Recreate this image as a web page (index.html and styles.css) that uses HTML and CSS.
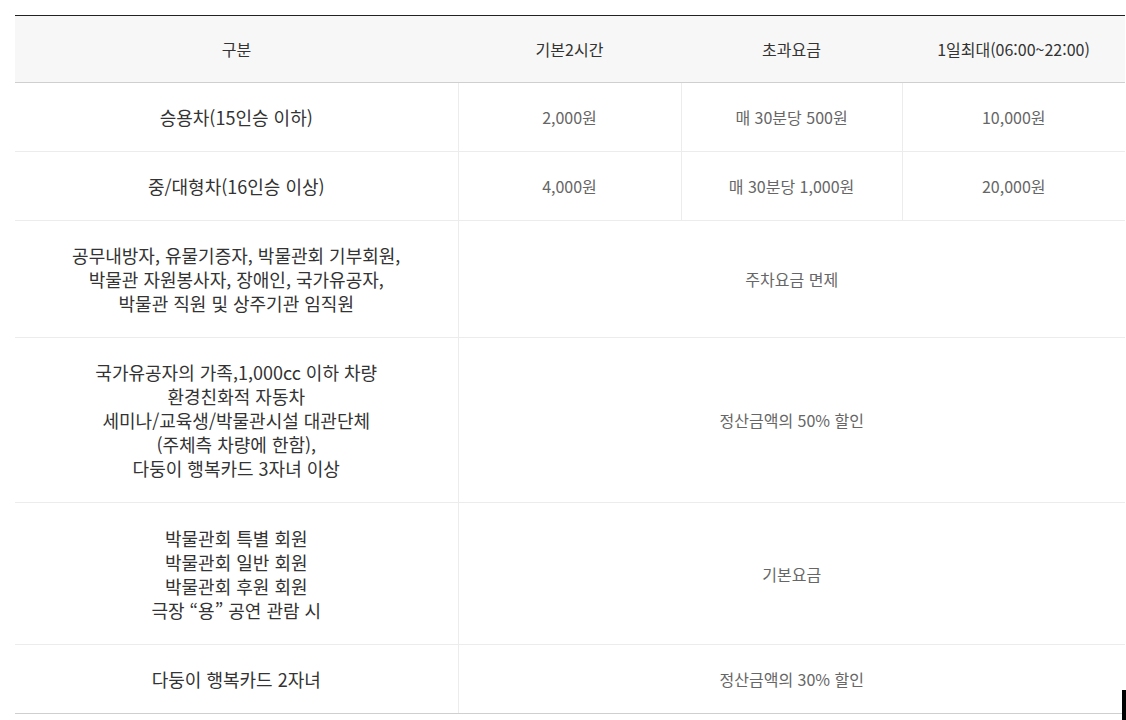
FILE: index.html
```html
<!DOCTYPE html>
<html lang="ko">
<head>
<meta charset="utf-8">
<link rel="stylesheet" href="styles.css">
</head>
<body>
<table class="fee">
  <colgroup>
    <col class="c1"><col class="c2"><col class="c3"><col class="c4">
  </colgroup>
  <thead>
    <tr><th>구분</th><th>기본2시간</th><th>초과요금</th><th>1일최대(06:00~22:00)</th></tr>
  </thead>
  <tbody>
    <tr><td class="cat">승용차(15인승 이하)</td><td>2,000원</td><td>매 30분당 500원</td><td>10,000원</td></tr>
    <tr><td class="cat">중/대형차(16인승 이상)</td><td>4,000원</td><td>매 30분당 1,000원</td><td>20,000원</td></tr>
    <tr><td class="cat">공무내방자, 유물기증자, 박물관회 기부회원,<br>박물관 자원봉사자, 장애인, 국가유공자,<br>박물관 직원 및 상주기관 임직원</td><td colspan="3">주차요금 면제</td></tr>
    <tr><td class="cat">국가유공자의 가족,1,000cc 이하 차량<br>환경친화적 자동차<br>세미나/교육생/박물관시설 대관단체<br>(주체측 차량에 한함),<br>다둥이 행복카드 3자녀 이상</td><td colspan="3">정산금액의 50% 할인</td></tr>
    <tr class="r5"><td class="cat">박물관회 특별 회원<br>박물관회 일반 회원<br>박물관회 후원 회원<br>극장 “용” 공연 관람 시</td><td colspan="3">기본요금</td></tr>
    <tr class="last"><td class="cat">다둥이 행복카드 2자녀</td><td colspan="3">정산금액의 30% 할인</td></tr>
  </tbody>
</table>
<div class="corner"></div>
</body>
</html>
```

FILE: styles.css
```css
html, body {
  margin: 0;
  background: #fff;
}
body {
  padding: 15px 0 0 15px;
  font-family: "Noto Sans CJK KR", "Noto Sans", sans-serif;
}
.fee {
  width: 1110px;
  border-collapse: collapse;
  table-layout: fixed;
  border-top: 1px solid #222;
}
.c1 { width: 443px; }
.c2 { width: 223px; }
.c3 { width: 221px; }
.c4 { width: 223px; }
.fee th {
  background: #f7f7f7;
  color: #333;
  font-size: 16px;
  font-weight: 400;
  line-height: 24px;
  padding: 21px 10px;
  border-bottom: 1px solid #cfcfcf;
  text-align: center;
}
.fee td {
  color: #666;
  font-size: 16px;
  line-height: 24px;
  padding: 22px 10px;
  border-bottom: 1px solid #ececec;
  border-left: 1px solid #ececec;
  text-align: center;
}
.fee td.cat {
  color: #333;
  font-size: 18px;
  border-left: none;
}
.fee tr.r5 td { padding: 23px 10px 22px; }
.fee tr.last td { border-bottom: 1px solid #cfcfcf; }
.corner {
  position: fixed;
  right: 0;
  bottom: 0;
  width: 4px;
  height: 30px;
  background: #000;
}
```
